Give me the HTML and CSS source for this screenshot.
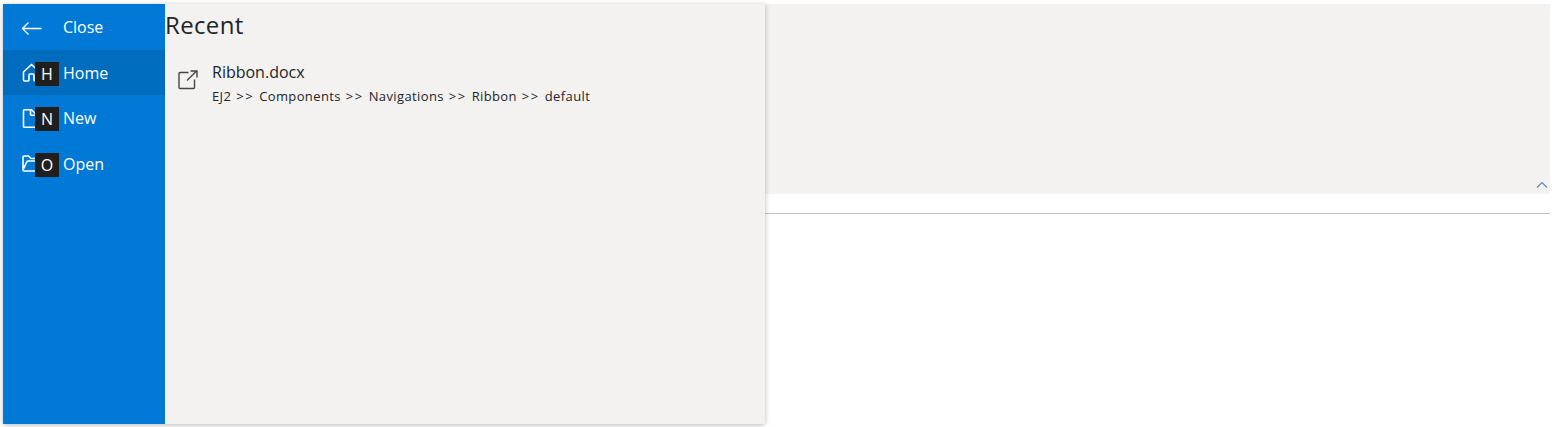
FILE: index.html
```html
<!DOCTYPE html>
<html lang="en">
<head>
<meta charset="utf-8">
<title>Ribbon</title>
<link rel="stylesheet" href="styles.css">
</head>
<body>
<div class="page">
  <div class="ribbon">
    <svg class="collapse" width="12" height="8" viewBox="0 0 12 8"><path d="M1 6.5 6 1.5l5 5"/></svg>
  </div>
  <div class="divider"></div>
  <div class="backstage">
    <nav class="menu">
      <div class="item">
        <svg class="icon" width="20" height="20" viewBox="0 0 20 20"><path d="M19.500 11.500H1M6.500 5.500l-6 6 6 6"/></svg>
        <span class="label">Close</span>
      </div>
      <div class="item active">
        <svg class="icon bold" width="20" height="20" viewBox="0 0 20 20"><path d="M1.500 17V9L9.500 1.500l8 7.500v8q0 1-1 1h-3.500q-1 0-1-1v-5q0-1-1-1h-3q-1 0-1 1v5q0 1-1 1h-3.500q-1 0-1-1z"/></svg>
        <span class="keytip">H</span>
        <span class="label">Home</span>
      </div>
      <div class="item">
        <svg class="icon bold" width="20" height="20" viewBox="0 0 20 20"><path d="M2.500 1.800h7l5.500 5.500v11q0 1-1 1h-11.500q-1 0-1-1v-15.500q0-1 1-1zM8.500 1.800v4.500q0 1 1 1h5"/></svg>
        <span class="keytip">N</span>
        <span class="label">New</span>
      </div>
      <div class="item">
        <svg class="icon bold" width="20" height="20" viewBox="0 0 20 20"><path d="M1 16v-13q0-1 1-1h4.500l2.500 2.500h6q1 0 1 1v1.500M1 16q0 1 1 1h14l3-10h-13q-1 0-1.300 1z"/></svg>
        <span class="keytip">O</span>
        <span class="label">Open</span>
      </div>
    </nav>
    <main class="content">
      <h1 class="title">Recent</h1>
      <div class="document">
        <svg class="link-icon" width="20" height="20" viewBox="0 0 20 20"><path d="M10.500 2.500h-8.500q-1 0-1 1v14q0 1 1 1h13.500q1 0 1-1v-8M9 10.500 18.500 1M12.500 1h6.500v6.500"/></svg>
        <div class="details">
          <div class="name">Ribbon.docx</div>
          <div class="path">EJ2<span class="sep"> &gt;&gt; </span>Components<span class="sep"> &gt;&gt; </span>Navigations<span class="sep"> &gt;&gt; </span>Ribbon<span class="sep"> &gt;&gt; </span>default</div>
        </div>
      </div>
    </main>
  </div>
</div>
</body>
</html>
```
FILE: styles.css
```css
* { box-sizing: border-box; }
body {
  margin: 0;
  background: #fff;
  color: #212529;
  font-family: "Open Sans", "Noto Sans", sans-serif;
  overflow: hidden;
}
.page { position: relative; height: 427px; padding: 4px 2px 0 3px; }
.ribbon {
  display: flex;
  justify-content: flex-end;
  align-items: flex-end;
  height: 190px;
  padding: 0 2px 5px 0;
  background: #f3f2f1;
}
.collapse { fill: none; stroke: #5c89a8; stroke-width: 1.1; }
.divider { height: 20px; border-bottom: 1px solid #c0c0c0; }
.backstage {
  position: absolute;
  top: 4px;
  left: 3px;
  display: flex;
  width: 762px;
  height: 420px;
  background: #f3f2f1;
  box-shadow: 0 1px 5px rgba(0, 0, 0, .28);
}
.menu { width: 162px; background: #0078d6; color: #fff; }
.item {
  position: relative;
  display: flex;
  align-items: center;
  height: 45.5px;
  padding-left: 19px;
}
.item:nth-child(even) { padding-top: 1px; }
.active { background: #006cbe; }
.icon { fill: none; stroke: #fff; stroke-width: 1.3; margin-right: 21px; }
.bold { stroke-width: 1.6; }
.keytip {
  position: absolute;
  left: 32px;
  top: 12px;
  width: 24px;
  height: 24px;
  background: #201f1e;
  font-size: 16px;
  line-height: 24px;
  text-align: center;
}
.label { font-size: 16px; line-height: 24px; }
.content { flex: 1; }
.title { margin: 5px 0 0; font-size: 24px; font-weight: 400; line-height: 32px; letter-spacing: .35px; }
.document { display: flex; gap: 14px; padding: 19px 0 0 13px; }
.link-icon { margin-top: 10px; fill: none; stroke: #484644; stroke-width: 1.4; }
.name { font-size: 16px; line-height: 24px; }
.path { font-size: 13px; line-height: 24px; letter-spacing: .38px; white-space: nowrap; }
.sep { letter-spacing: 1.55px; }
```
